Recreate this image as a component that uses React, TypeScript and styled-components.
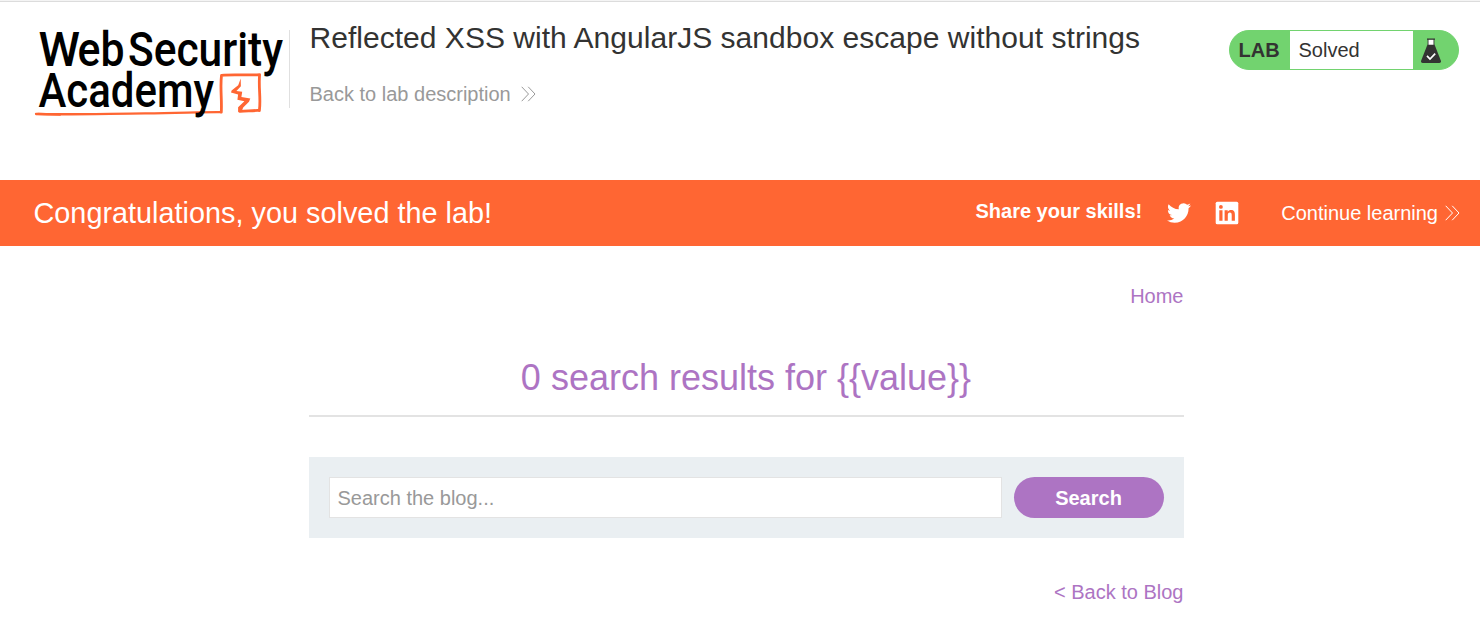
import React from "react";
import styled, { createGlobalStyle } from "styled-components";

const GlobalStyle = createGlobalStyle`
  *, *::before, *::after { box-sizing: border-box; }
  body {
    margin: 0;
    background: #fff;
    color: #333332;
    font: 20px/24px "Liberation Sans", Arial, sans-serif;
  }
  h1, h2, p { margin: 0; font-weight: 400; }
  a { color: inherit; text-decoration: none; }
  svg { display: block; flex: none; }
`;

const Page = styled.div`
  min-height: 626px;
  border-top: 1px solid #f4f4f4;
`;

const Header = styled.header`
  display: flex;
  align-items: flex-start;
  height: 179px;
  border-top: 1px solid #dcdcdc;
  padding: 28px 21px 0 34px;
`;

const LogoLink = styled.a`
  display: block;
  width: 256px;
  height: 78px;
  border-right: 1px solid #e0e0e0;
`;

const TitleBlock = styled.div`
  flex: 1;
  margin: -10px 0 0 19.5px;
`;

const Title = styled.h2`
  font-size: 30px;
  line-height: 36px;
  letter-spacing: 0.03px;
`;

const BackLink = styled.a`
  display: flex;
  align-items: center;
  gap: 10.5px;
  margin-top: 26px;
  color: #999;
`;

const LabStatus = styled.div`
  display: flex;
  width: 230px;
  height: 40px;
  border: 1px solid #72d36f;
  border-radius: 20px;
  background: #72d36f;
  overflow: hidden;
  line-height: 38px;
`;

const LabLabel = styled.span`
  width: 60px;
  padding-left: 8.5px;
  font-weight: 700;
`;

const LabState = styled.span`
  width: 123px;
  padding-left: 8.5px;
  background: #fff;
`;

const LabIcon = styled.span`
  padding: 7px 0 0 8px;
`;

const Banner = styled.section`
  display: flex;
  align-items: center;
  height: 66px;
  padding: 0 20px 0 33.5px;
  background: #ff6633;
  color: #fff;
`;

const BannerTitle = styled.h2`
  flex: 1;
  font-size: 28.8px;
  line-height: 34px;
  letter-spacing: 0.02px;
`;

const Share = styled.div`
  display: flex;
  align-items: center;
  gap: 24px;
  margin-right: 42px;
`;

const ShareText = styled.span`
  padding: 0 1px 4px 0;
  font-weight: 700;
`;

const ContinueLink = styled.a`
  display: flex;
  align-items: center;
  gap: 7px;
`;

const Main = styled.main`
  display: flex;
  flex-direction: column;
  width: 875px;
  margin-left: 309px;
  padding-top: 38px;
  color: #ad74c3;
`;

const NavLink = styled.a`
  align-self: flex-end;
  margin-right: 0.5px;
`;

const ResultsHeader = styled.header`
  height: 67px;
  margin: 42px 0 40px;
  border-bottom: 2px solid #e3e3e3;
  text-align: center;
`;

const ResultsTitle = styled.h1`
  padding: 7px 1px 0 0;
  font-size: 36px;
  line-height: 42px;
`;

const SearchForm = styled.form`
  display: flex;
  gap: 12px;
  height: 81px;
  margin-bottom: 42px;
  padding: 20px;
  background: #eaeff2;
`;

const SearchInput = styled.input`
  flex: 1;
  min-width: 0;
  height: 41px;
  padding: 1px 8px 0 7.5px;
  border: 1px solid #e3e3e3;
  border-radius: 0;
  background: #fff;
  font: inherit;
  outline: none;
  &::placeholder { color: #999; opacity: 1; }
`;

const SearchButton = styled.button`
  width: 150px;
  height: 41px;
  padding: 0 1px 0 0;
  border: 0;
  border-radius: 20.5px;
  background: #ad74c3;
  color: #fff;
  font: inherit;
  font-weight: 700;
`;

const LogoDrawing = styled.svg`
  overflow: visible;
`;

const LogoText = styled.text`
  font-family: Roboto, "Liberation Sans", sans-serif;
  font-size: 48px;
  font-weight: 500;
  fill: #000;
`;

function Logo() {
  return (
    <LogoDrawing width="250" height="90" viewBox="34 30 250 90">
      <LogoText x="38.5" y="66" textLength="41.5" lengthAdjust="spacingAndGlyphs">W</LogoText>
      <LogoText x="77.5" y="66" textLength="47" lengthAdjust="spacingAndGlyphs">eb</LogoText>
      <LogoText x="128" y="66" textLength="155" lengthAdjust="spacingAndGlyphs">Security</LogoText>
      <g fill="none" stroke="#ff6633" strokeLinejoin="round" strokeLinecap="round">
        <path d="M36 114C70 114.8 110 113.6 145 113.4S200 112 221 112.2" strokeWidth="2.3" />
        <path d="M38 113.9L60 114.7" strokeWidth="2.2" />
        <path d="M221.3 112.2C222 98 220 88 221.5 75.3C234 74.2 247 75.6 259.6 74.6C258.4 88 261 98 259.4 110.5C253 110.2 246 111.5 239.8 111.4" strokeWidth="2.8" />
      </g>
      <path d="M240.7 78.6L240.9 86.2L236.4 91L242.2 91.8L241.4 96.9L250.3 98.6L249 101.8L243.2 107.6L242 110.4L238.1 112L238.1 107.2L244.4 101.2L237.4 99.8L238.1 94.6L231 92.6L231.6 90.4L238.2 85.2Z" fill="#ff6633" />
      <LogoText x="38.5" y="107" textLength="175.5" lengthAdjust="spacingAndGlyphs">Academy</LogoText>
    </LogoDrawing>
  );
}

function Chevrons() {
  return (
    <svg width="15" height="16" viewBox="0 0 15 16" fill="none" stroke="currentColor" strokeWidth="1">
      <path d="M.7 .8L7.5 8L.7 15.2M7.2 .8L14 8L7.2 15.2" />
    </svg>
  );
}

function Flask() {
  return (
    <svg width="20" height="25" viewBox="0 0 20 25">
      <path d="M7 1.5H13V7H7Z" fill="#fff" />
      <path d="M6 .5H14V1.7H13.4V7H12.5V1.7H7.5V7H6.6V1.7H6Z" fill="#333332" />
      <path d="M6.4 6.7H13.6L19.8 22.5C20.3 24 19.8 25 18.3 25H1.7C.2 25-.3 24 .2 22.5Z" fill="#333332" />
      <path d="M6 17.8L9 21L14.2 15.7" fill="none" stroke="#fff" strokeWidth="1.7" />
    </svg>
  );
}

function Twitter() {
  return (
    <svg width="24" height="24" viewBox="0 0 24 24" fill="#fff">
      <path d="M23.95 4.57a10 10 0 0 1-2.82.77 4.96 4.96 0 0 0 2.16-2.72c-.95.56-2 .96-3.13 1.19a4.92 4.92 0 0 0-8.38 4.48C7.69 8.1 4.07 6.13 1.64 3.16a4.82 4.82 0 0 0-.67 2.48c0 1.71.87 3.21 2.19 4.1a4.9 4.9 0 0 1-2.23-.62v.06a4.92 4.92 0 0 0 3.95 4.83 5 5 0 0 1-2.21.08 4.94 4.94 0 0 0 4.6 3.42A9.87 9.87 0 0 1 0 19.54a13.99 13.99 0 0 0 7.56 2.21c9.05 0 14-7.5 14-13.98 0-.21 0-.42-.02-.63A9.94 9.94 0 0 0 24 4.59Z" />
    </svg>
  );
}

function LinkedIn() {
  return (
    <svg width="24" height="24" viewBox="0 0 24 24">
      <rect x=".7" y=".7" width="22.6" height="22.6" rx="1.6" fill="#fff" />
      <circle cx="5.9" cy="5.9" r="1.9" fill="#ff6633" />
      <path d="M4.3 9.2H7.5V19.8H4.3ZM9.6 9.2H12.7V10.7C13.4 9.5 14.6 8.9 16 8.9C19 8.9 19.9 10.8 19.9 13.8V19.8H16.7V14.4C16.7 12.8 16.4 11.6 14.9 11.6C13.3 11.6 12.8 12.8 12.8 14.3V19.8H9.6Z" fill="#ff6633" />
    </svg>
  );
}

export default function App() {
  return (
    <Page>
      <GlobalStyle />
      <Header>
        <LogoLink href="#" aria-label="Web Security Academy"><Logo /></LogoLink>
        <TitleBlock>
          <Title>Reflected XSS with AngularJS sandbox escape without strings</Title>
          <BackLink href="#">Back to lab description<Chevrons /></BackLink>
        </TitleBlock>
        <LabStatus>
          <LabLabel>LAB</LabLabel>
          <LabState>Solved</LabState>
          <LabIcon><Flask /></LabIcon>
        </LabStatus>
      </Header>
      <Banner>
        <BannerTitle>Congratulations, you solved the lab!</BannerTitle>
        <Share>
          <ShareText>Share your skills!</ShareText>
          <Twitter />
          <LinkedIn />
        </Share>
        <ContinueLink href="#">Continue learning<Chevrons /></ContinueLink>
      </Banner>
      <Main>
        <NavLink href="#">Home</NavLink>
        <ResultsHeader>
          <ResultsTitle>0 search results for {"{{value}}"}</ResultsTitle>
        </ResultsHeader>
        <SearchForm>
          <SearchInput type="text" placeholder="Search the blog..." />
          <SearchButton type="button">Search</SearchButton>
        </SearchForm>
        <NavLink href="#">&lt; Back to Blog</NavLink>
      </Main>
    </Page>
  );
}
